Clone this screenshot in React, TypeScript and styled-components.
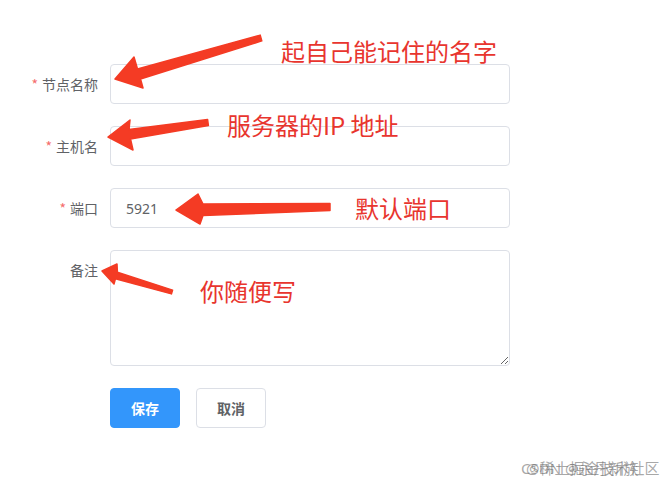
import React from "react";
import styled, { createGlobalStyle } from "styled-components";

const Global = createGlobalStyle`
  html, body { margin: 0; padding: 0; background: #fff; }
  body { font-family: "Noto Sans CJK SC", "Noto Sans", sans-serif; }
  * { box-sizing: border-box; }
`;

const Page = styled.div`
  position: relative;
  width: 672px;
  height: 488px;
  overflow: hidden;
  background: #fff;
`;

const Form = styled.form`
  display: flex;
  flex-direction: column;
  gap: 22px;
  padding-top: 64px;
`;

const Row = styled.div`
  display: flex;
  align-items: flex-start;
`;

const Label = styled.label<{ $required?: boolean }>`
  width: 110px;
  flex: none;
  padding-right: 12px;
  text-align: right;
  font-size: 14px;
  line-height: 40px;
  height: 40px;
  color: #606266;
  &::before {
    content: ${(p) => (p.$required ? '"*"' : '""')};
    color: #f56c6c;
    margin-right: 4px;
  }
`;

const Input = styled.input`
  width: 400px;
  height: 40px;
  border: 1px solid #dcdfe6;
  border-radius: 4px;
  padding: 0 15px;
  font-family: "Noto Sans", "Noto Sans CJK SC", sans-serif;
  font-size: 14px;
  color: #606266;
  outline: none;
  background: #fff;
`;

const TextArea = styled.textarea`
  width: 400px;
  height: 116px;
  border: 1px solid #dcdfe6;
  border-radius: 4px;
  padding: 5px 15px;
  font-size: 14px;
  color: #606266;
  outline: none;
  resize: vertical;
  font-family: inherit;
`;

const Actions = styled.div`
  display: flex;
  gap: 16px;
  padding-left: 110px;
`;

const Button = styled.button<{ $primary?: boolean }>`
  height: 40px;
  padding: 0 20px;
  border-radius: 4px;
  font-family: inherit;
  font-size: 14px;
  font-weight: 700;
  cursor: pointer;
  border: 1px solid ${(p) => (p.$primary ? "#3396fb" : "#dcdfe6")};
  background: ${(p) => (p.$primary ? "#3396fb" : "#fff")};
  color: ${(p) => (p.$primary ? "#fff" : "#606266")};
`;

const Note = styled.span<{ $x: number; $y: number }>`
  position: absolute;
  left: ${(p) => p.$x}px;
  top: ${(p) => p.$y}px;
  font-size: 24px;
  line-height: 24px;
  color: #e8352e;
  white-space: nowrap;
  font-family: "Noto Sans CJK SC", sans-serif;
  font-weight: 400;
`;

const Overlay = styled.svg`
  position: absolute;
  left: 0;
  top: 0;
  pointer-events: none;
`;

const Watermark = styled.span<{ $x: number }>`
  position: absolute;
  left: ${(p) => p.$x}px;
  top: 458px;
  font-size: 15px;
  line-height: 20px;
  color: rgba(110, 110, 110, 0.6);
  white-space: nowrap;
  font-family: "Noto Sans", "Noto Sans CJK SC", sans-serif;
`;

const arrows = [
  "115,79 134,57 137.5,69 260.2,35.1 261.8,40.9 140.5,79 143,88",
  "108,137 130,120 129,129.5 207.6,119.5 208.4,125.5 130.5,139 133,150",
  "176,210 198,194 203,204 330,203.5 330,210.5 203,215.5 200,224",
  "102,271 117,264 117.4,272.2 172.6,290.1 171.4,293.9 115.4,278.7 114,284",
];

export default function App() {
  return (
    <Page>
      <Global />
      <Form onSubmit={(e) => e.preventDefault()}>
        <Row>
          <Label $required>节点名称</Label>
          <Input defaultValue="" />
        </Row>
        <Row>
          <Label $required>主机名</Label>
          <Input defaultValue="" />
        </Row>
        <Row>
          <Label $required>端口</Label>
          <Input defaultValue="5921" />
        </Row>
        <Row>
          <Label>备注</Label>
          <TextArea />
        </Row>
        <Actions>
          <Button type="button" $primary>保存</Button>
          <Button type="button">取消</Button>
        </Actions>
      </Form>

      <Overlay width="672" height="488" viewBox="0 0 672 488">
        {arrows.map((pts, i) => (
          <polygon
            key={i}
            points={pts}
            fill="#f43b24"
            stroke="#f43b24"
            strokeWidth="1.5"
            strokeLinejoin="round"
          />
        ))}
      </Overlay>

      <Note $x={281} $y={39}>起自己能记住的名字</Note>
      <Note $x={227} $y={113}>服务器的IP 地址</Note>
      <Note $x={355} $y={196}>默认端口</Note>
      <Note $x={200} $y={279}>你随便写</Note>

      <Watermark $x={521}>CSDN @永丹新族</Watermark>
      <Watermark $x={526}>@稀土掘金技术社区</Watermark>
    </Page>
  );
}
